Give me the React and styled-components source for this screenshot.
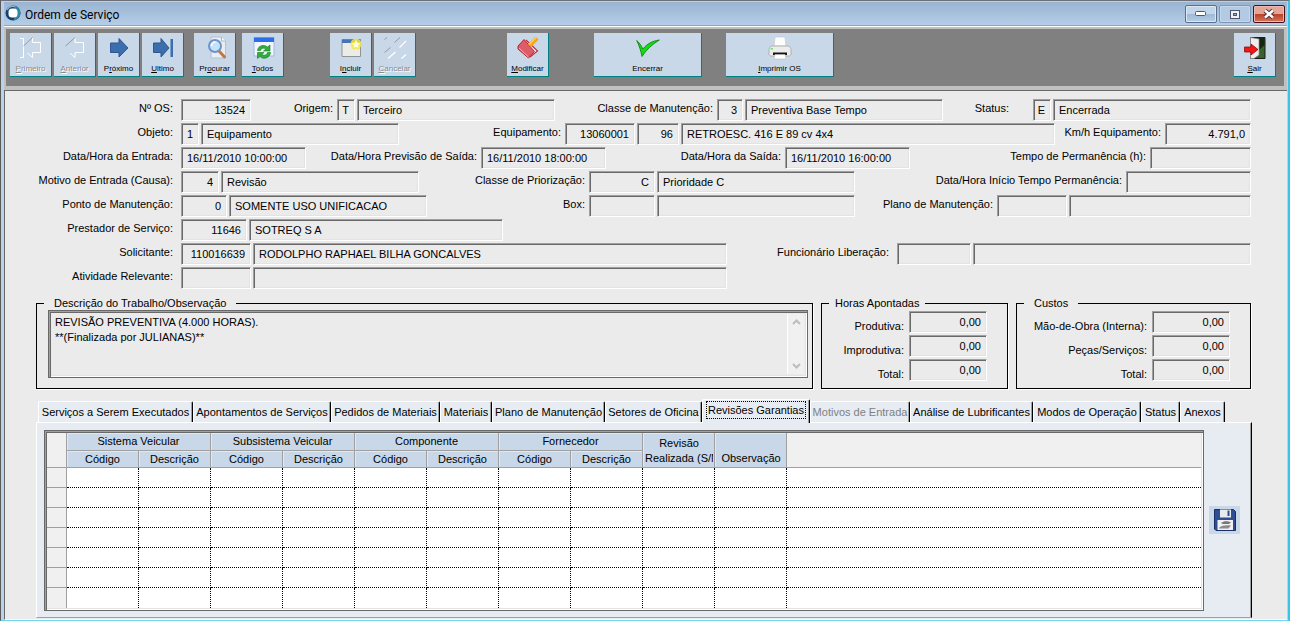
import React, { useState } from "react";
import styled, { createGlobalStyle, css } from "styled-components";

const tabs = [
  { name: "Serviços a Serem Executados", width: 155 },
  { name: "Apontamentos de Serviços", width: 138 },
  { name: "Pedidos de Materiais", width: 109 },
  { name: "Materiais", width: 52 },
  { name: "Plano de Manutenção", width: 113 },
  { name: "Setores de Oficina", width: 97 },
  { name: "Revisões Garantias", width: 108 },
  { name: "Motivos de Entrada", width: 100, disabled: true },
  { name: "Análise de Lubrificantes", width: 123 },
  { name: "Modos de Operação", width: 108 },
  { name: "Status", width: 39 },
  { name: "Anexos", width: 45 },
];

const groups = ["Sistema Veicular", "Subsistema Veicular", "Componente", "Fornecedor"];

// each row is a list of groups: label, label width, gap before the first field, fields
const rows = [
  [
    { label: "Nº OS:", fields: [{ w: 70, value: "13524", right: true }] },
    { label: "Origem:", w: 86, fields: [{ w: 18, value: "T", right: true }, { w: 198, value: "Terceiro" }] },
    { label: "Classe de Manutenção:", w: 162, fields: [{ w: 26, value: "3", right: true }, { w: 198, value: "Preventiva Base Tempo" }] },
    { label: "Status:", w: 90, space: 24, fields: [{ w: 18, value: "E", right: true }, { w: 198, value: "Encerrada" }] },
  ],
  [
    { label: "Objeto:", fields: [{ w: 18, value: "1", right: true }, { w: 198, value: "Equipamento" }] },
    { label: "Equipamento:", w: 166, fields: [{ w: 70, value: "13060001", right: true }, { w: 42, value: "96", right: true }, { w: 374, value: "RETROESC. 416 E 89 cv 4x4" }] },
    { label: "Km/h Equipamento:", w: 110, fields: [{ w: 86, value: "4.791,0", right: true }] },
  ],
  [
    { label: "Data/Hora da Entrada:", fields: [{ w: 125, value: "16/11/2010 10:00:00" }] },
    { label: "Data/Hora Previsão de Saída:", w: 175, fields: [{ w: 125, value: "16/11/2010 18:00:00" }] },
    { label: "Data/Hora da Saída:", w: 179, fields: [{ w: 125, value: "16/11/2010 16:00:00" }] },
    { label: "Tempo de Permanência (h):", w: 240, fields: [{ w: 101 }] },
  ],
  [
    { label: "Motivo de Entrada (Causa):", fields: [{ w: 38, value: "4", right: true }, { w: 198, value: "Revisão" }] },
    { label: "Classe de Priorização:", w: 170, fields: [{ w: 66, value: "C", right: true }, { w: 198, value: "Prioridade C" }] },
    { label: "Data/Hora Início Tempo Permanência:", w: 271, fields: [{ w: 125 }] },
  ],
  [
    { label: "Ponto de Manutenção:", fields: [{ w: 46, value: "0", right: true }, { w: 198, value: "SOMENTE USO UNIFICACAO" }] },
    { label: "Box:", w: 162, fields: [{ w: 66 }, { w: 198 }] },
    { label: "Plano de Manutenção:", w: 142, fields: [{ w: 70 }, { w: 182 }] },
  ],
  [
    { label: "Prestador de Serviço:", fields: [{ w: 66, value: "11646", right: true }, { w: 254, value: "SOTREQ S A" }] },
  ],
  [
    { label: "Solicitante:", fields: [{ w: 70, value: "110016639", right: true }, { w: 474, value: "RODOLPHO RAPHAEL BILHA GONCALVES" }] },
    { label: "Funcionário Liberação:", w: 170, space: 8, fields: [{ w: 74 }, { w: 278 }] },
  ],
  [{ label: "Atividade Relevante:", fields: [{ w: 70 }, { w: 474 }] }],
];

const Icon = ({ children, size = 24 }) => (
  <svg width={size} height={size} viewBox="0 0 24 24" aria-hidden="true">
    {children}
  </svg>
);

const FirstIcon = () => (
  <Icon>
    <g fill="none" strokeWidth="1">
      <path d="M1 2.500H4.500V21.500H1M13.500 2V6.500H21.500V16.500H13.500V21.500L8.500 17" stroke="#fff" />
      <path d="M4.500 10L13.500 1.500" stroke="#999" />
    </g>
  </Icon>
);

const PreviousIcon = () => (
  <Icon>
    <g fill="none">
      <path d="M12 2V6.500H20.500V16.500H12V21.500L7 17" stroke="#fff" />
      <path d="M2.500 10L12 1.500" stroke="#999" />
    </g>
  </Icon>
);

const NextIcon = () => (
  <Icon>
    <path d="M3.500 7H12V2.500L21 12L12 21V16.500H3.500Z" fill="#3b6ead" stroke="#2d578f" strokeWidth="1" />
  </Icon>
);

const LastIcon = () => (
  <Icon>
    <path d="M2.500 7H10V2.500L18 12L10 21V16.500H2.500Z" fill="#3b6ead" stroke="#2d578f" strokeWidth="1" />
    <path d="M19.500 3H22V21H19.500Z" fill="#3b6ead" />
  </Icon>
);

const SearchIcon = () => (
  <Icon>
    <path d="M8 1H18.500L22.500 5V22H8Z" fill="#e9eef5" stroke="#b4c1d2" strokeWidth="1" />
    <path d="M18.500 1V5H22.500" fill="#fff" stroke="#a9b6c7" strokeWidth="1" />
    <path d="M16 15L21.500 21" stroke="#c07a45" strokeWidth="3" strokeLinecap="round" />
    <circle cx="12" cy="10" r="6" fill="#c4e2fa" stroke="#6e94c8" strokeWidth="2" />
    <path d="M8.500 10A4 4 0 0 1 12.500 6" fill="none" stroke="#fff" strokeWidth="1.500" />
  </Icon>
);

const RefreshIcon = () => (
  <Icon>
    <path d="M3 1.500H23V20H3Z" fill="#f2f6fc" stroke="#9db8e0" strokeWidth="1" />
    <path d="M3 1.500H23V6H3Z" fill="#2a6ee8" />
    <path d="M6.500 14.500C7 9.500 13 8 16.500 11L19 9V15H12.500L15 13C13 11.500 10 12 9.500 14.500Z" fill="#2fae3a" stroke="#137a20" strokeWidth="0.600" />
    <path d="M19.500 16.500C19 22 12.500 24 9 20.500L6.500 22.500V16.500H13L11 18.500C13 20 16 19 16.500 16.500Z" fill="#2fae3a" stroke="#137a20" strokeWidth="0.600" />
  </Icon>
);

const NewIcon = () => (
  <Icon>
    <path d="M3 3.500H21.500V20.500H3Z" fill="#ecebe6" stroke="#8f9498" strokeWidth="1" />
    <path d="M3 3.500H21.500V7H3Z" fill="#4574b8" />
    <circle cx="17" cy="8" r="5.500" fill="#f6ee4c" opacity="0.800" />
    <path d="M17 3L18.500 6.500L22 7L19.500 9.500L20 13L17 11.300L14 13L14.500 9.500L12 7L15.500 6.500Z" fill="#fffde0" stroke="#f0dc28" strokeWidth="0.700" />
  </Icon>
);

const CancelIcon = () => (
  <Icon>
    <path d="M1.500 3.500L4 1.500M11.500 6.500L17 1.500M1.500 16.500L7.500 11.500" stroke="#999" />
    <path d="M16.500 11.500L23 5M5 22.500L12.500 16M18.500 22.500L23 18.500" stroke="#fff" strokeWidth="1.200" />
  </Icon>
);

const EditIcon = () => (
  <Icon>
    <path d="M10 4L21.500 15L14 21" fill="#fff" stroke="#c02c3c" strokeWidth="1.200" />
    <path d="M2 10L8 3.500L18.500 15.500L12.500 22L2 13Z" fill="#dd5c68" stroke="#b82434" strokeWidth="1" />
    <path d="M3 12L12.500 21" stroke="#f7b3b8" strokeWidth="1" />
    <path d="M13.500 9.500L21 2" stroke="#f5a51c" strokeWidth="4.500" />
    <path d="M13 8.500L20 1.500" stroke="#ffd55c" strokeWidth="1.500" />
  </Icon>
);

const CheckIcon = () => (
  <Icon>
    <path d="M0.700 4.500C3 6.500 5.500 9.500 6.800 13C11 8 16 5 23.300 4C16 8.500 10 14 6 20.500C5 15 3 9 0.700 4.500Z" fill="#12dc12" stroke="#087a08" strokeWidth="0.800" />
  </Icon>
);

const PrintIcon = () => (
  <Icon>
    <path d="M7 1H17L18 10H6Z" fill="#fdfdfd" stroke="#c9c9c9" strokeWidth="0.700" />
    <path d="M4.500 10H19.500C22 10 23 12 23 14V18C23 19 22 20 21 20H3C2 20 1 19 1 18V14C1 12 2 10 4.500 10Z" fill="#ececea" stroke="#a5a5a3" strokeWidth="0.800" />
    <path d="M5 16.500H19V19H5Z" fill="#151515" />
    <path d="M7 18.500H17L18 23H6Z" fill="#fff" stroke="#bbb" strokeWidth="0.600" />
    <path d="M2.500 12H5V13.500H2.500Z" fill="#73e073" />
  </Icon>
);

const ExitIcon = () => (
  <Icon>
    <path d="M7.500 1.500H22V22.500H7.500Z" fill="#37632a" stroke="#1d1d1d" strokeWidth="1" />
    <path d="M14 2H21.500V9L14 16Z" fill="#17270f" />
    <path d="M7.500 1.500L16 3V19L11 22.500H7.500Z" fill="#eee" stroke="#8a8a8a" strokeWidth="0.700" />
    <path d="M1.500 11H8V8L15 13.500L8 19V16H1.500Z" fill="#f21616" stroke="#990808" strokeWidth="0.800" />
  </Icon>
);

const SaveIcon = () => (
  <Icon>
    <path d="M1.500 1.500H20.500L22.500 3.500V22.500H3L1.500 21Z" fill="#2f4d95" stroke="#1b2c66" strokeWidth="1" />
    <path d="M7 1.500H18V9.500H7Z" fill="#e9ebef" />
    <path d="M14.500 2.500H16.500V8H14.500Z" fill="#2f4d95" />
    <path d="M4.500 12H20V22H4.500Z" fill="#f1f1f1" />
    <path d="M8 15C11 12.500 15 13 18 14.500L16 16H10Z" fill="#777" />
    <path d="M6 20C8 17 15 17 18 17.500L15.500 20.500H6Z" fill="#8c8c8c" />
  </Icon>
);

const Logo = () => (
  <svg width="16" height="16" viewBox="0 0 16 16" aria-hidden="true">
    <circle cx="8" cy="8" r="7.500" fill="#1b3f6b" />
    <path d="M8 0.500A7.500 7.500 0 0 1 8 15.500C11 13 11 3 8 0.500Z" fill="#2f86a5" />
    <path d="M2 5A7 7 0 0 1 10 1.500" fill="none" stroke="#8fb4cf" strokeWidth="1.500" />
    <rect x="3.500" y="3.500" width="9" height="9" rx="3.500" fill="#fff" />
  </svg>
);

const tools = [
  { label: "Primeiro", icon: FirstIcon, disabled: true },
  { label: "Anterior", icon: PreviousIcon, disabled: true },
  { label: "Próximo", icon: NextIcon, under: 1 },
  { label: "Ultimo", icon: LastIcon },
  { label: "Procurar", icon: SearchIcon, under: 2, before: 8 },
  { label: "Todos", icon: RefreshIcon, before: 4 },
  { label: "Incluir", icon: NewIcon, under: 1, before: 44 },
  { label: "Cancelar", icon: CancelIcon, disabled: true },
  { label: "Modificar", icon: EditIcon, before: 89 },
  { label: "Encerrar", icon: CheckIcon, under: -1, before: 43, wide: true },
  { label: "Imprimir OS", icon: PrintIcon, before: 22, wide: true },
  { label: "Sair", icon: ExitIcon, last: true },
];

const ToolButton = ({ tool }) => {
  const text = tool.label;
  const at = tool.under || 0;
  const Picture = tool.icon;

  return (
    <Tool type="button" disabled={tool.disabled} $before={tool.before} $wide={tool.wide} $last={tool.last}>
      <Picture />
      <span>
        {at < 0 ? text : (
          <>
            {text.slice(0, at)}
            <u>{text[at]}</u>
            {text.slice(at + 1)}
          </>
        )}
      </span>
    </Tool>
  );
};

const FormGroup = ({ group, id }) => (
  <>
    <Label htmlFor={id + "-0"} $width={group.w} $space={group.space}>
      {group.label}
    </Label>
    <Fields>
      {group.fields.map((field, i) => (
        <Field
          key={i}
          id={id + "-" + i}
          aria-label={i > 0 ? group.label : undefined}
          defaultValue={field.value}
          $width={field.w}
          $right={field.right}
          readOnly
        />
      ))}
    </Fields>
  </>
);

const Totals = ({ title, labels, id, width, tight }) => (
  <Box $width={width} $tight={tight}>
    <legend>{title}</legend>
    <TotalList>
      {labels.map((label, i) => (
        <TotalRow key={label}>
          <label htmlFor={id + i}>{label}</label>
          <Field id={id + i} defaultValue="0,00" $width={78} $right readOnly />
        </TotalRow>
      ))}
    </TotalList>
  </Box>
);

const App = () => {
  const [active, setActive] = useState("Revisões Garantias");

  return (
    <>
      <GlobalStyle />
      <Window>
        <TitleBar>
          <Logo />
          <h1>Ordem de Serviço</h1>
          <WindowButton type="button" aria-label="Minimizar">
            <svg width="12" height="6" viewBox="0 0 12 6">
              <rect x="0.5" y="0.5" width="10" height="4" rx="1" fill="#fff" stroke="#535666" />
            </svg>
          </WindowButton>
          <WindowButton type="button" aria-label="Restaurar" $faded>
            <svg width="11" height="9" viewBox="0 0 11 9">
              <rect x="0.5" y="0.5" width="9" height="8" fill="#eef3fa" stroke="#535666" />
              <rect x="3.5" y="3.5" width="3" height="2" fill="#8fa9c8" stroke="#535666" />
            </svg>
          </WindowButton>
          <WindowButton type="button" aria-label="Fechar" $close>
            <svg width="12" height="10" viewBox="0 0 12 10">
              <path d="M2 1.500L10 8.500M10 1.500L2 8.500" stroke="#4b3440" strokeWidth="4.500" />
              <path d="M2 1.500L10 8.500M10 1.500L2 8.500" stroke="#fff" strokeWidth="2.500" />
            </svg>
          </WindowButton>
        </TitleBar>

        <ToolFrame>
          <Toolbar>
            {tools.map((tool) => (
              <ToolButton key={tool.label} tool={tool} />
            ))}
          </Toolbar>
        </ToolFrame>

        <Content>
          <form>
            {rows.map((row, r) => (
              <Row key={r}>
                {row.map((group, g) => (
                  <FormGroup key={g} group={group} id={"f" + r + "-" + g} />
                ))}
              </Row>
            ))}

            <Boxes>
              <Box>
                <legend>Descrição do Trabalho/Observação</legend>
                <Notes>
                  <textarea
                    aria-label="Descrição do Trabalho/Observação"
                    defaultValue={"REVISÃO PREVENTIVA (4.000 HORAS).\n**(Finalizada por JULIANAS)**"}
                    readOnly
                  />
                  <Scroll>
                    <svg width="9" height="6" viewBox="0 0 9 6">
                      <path d="M1 5L4.500 1.500L8 5" fill="none" stroke="#bdbdbd" strokeWidth="2" />
                    </svg>
                    <svg width="9" height="6" viewBox="0 0 9 6">
                      <path d="M1 1L4.500 4.500L8 1" fill="none" stroke="#bdbdbd" strokeWidth="2" />
                    </svg>
                  </Scroll>
                </Notes>
              </Box>
              <Totals
                title="Horas Apontadas"
                labels={["Produtiva:", "Improdutiva:", "Total:"]}
                id="hours"
                width={187}
                tight
              />
              <Totals
                title="Custos"
                labels={["Mão-de-Obra (Interna):", "Peças/Serviços:", "Total:"]}
                id="costs"
                width={235}
              />
            </Boxes>
          </form>

          <TabList role="tablist">
            {tabs.map((tab) => (
              <Tab
                key={tab.name}
                type="button"
                role="tab"
                aria-selected={tab.name === active}
                disabled={tab.disabled}
                onClick={() => setActive(tab.name)}
                $width={tab.width}
                $active={tab.name === active}
              >
                <span>{tab.name}</span>
              </Tab>
            ))}
          </TabList>

          <TabPanel role="tabpanel">
            <GridFrame>
              <Grid>
                <colgroup>
                  <col width="20" />
                  {Array.from({ length: 10 }, (_, i) => (
                    <col key={i} width="72" />
                  ))}
                  <col />
                </colgroup>
                <thead>
                  <tr>
                    <Corner rowSpan="2" />
                    {groups.map((group) => (
                      <th key={group} colSpan="2">{group}</th>
                    ))}
                    <TallHead rowSpan="2">
                      <div>
                        <span>Revisão</span>
                        <span>Realizada (S/N)</span>
                      </div>
                    </TallHead>
                    <TallHead rowSpan="2">
                      <div>
                        <span>Observação</span>
                      </div>
                    </TallHead>
                    <Rest rowSpan="2" />
                  </tr>
                  <tr>
                    {groups.map((group) => (
                      <React.Fragment key={group}>
                        <th>Código</th>
                        <th>Descrição</th>
                      </React.Fragment>
                    ))}
                  </tr>
                </thead>
                <tbody>
                  {Array.from({ length: 7 }, (_, r) => (
                    <tr key={r}>
                      {Array.from({ length: 12 }, (_, c) => (
                        <td key={c} />
                      ))}
                    </tr>
                  ))}
                </tbody>
              </Grid>
            </GridFrame>
            <SaveButton type="button" aria-label="Salvar">
              <SaveIcon />
            </SaveButton>
          </TabPanel>
        </Content>
      </Window>
    </>
  );
};

const GlobalStyle = createGlobalStyle`
  * {
    box-sizing: border-box;
  }

  body {
    margin: 0;
    font-family: "Liberation Sans", Arial, sans-serif;
    font-size: 11px;
    color: #000;
  }

  button, input, textarea {
    font: inherit;
    color: inherit;
    border-radius: 0;
  }
`;

const Window = styled.div`
  display: flex;
  flex-direction: column;
  min-height: 100vh;
  padding: 1px 1px 0 3px;
  background-color: #b9d1ea;
  border-style: solid;
  border-width: 1px 2px 2px 1px;
  border-color: #6f6f78 #35c5e5 #6fd8ee #5a5a5a;
`;

const TitleBar = styled.header`
  display: flex;
  align-items: flex-start;
  gap: 2px;
  height: 25px;
  padding: 3px 2px 0 1px;
  background: linear-gradient(#99b4d1, #b6cfe9);
  border-bottom: 1px solid #fff;
  box-shadow: inset 0 -1px #a0a0a0;

  h1 {
    flex: 1;
    margin: 0 0 0 2px;
    font-family: Roboto, "Segoe UI", sans-serif;
    font-size: 12px;
    line-height: 20px;
    font-weight: 400;
  }
`;

const WindowButton = styled.button`
  display: flex;
  align-items: center;
  justify-content: center;
  width: 32px;
  height: 18px;
  padding: 0;
  border: 1px solid #5a6f8c;
  border-radius: 2px;
  background: linear-gradient(#c3d5e9 50%, #9fb9d6 50%, #b5cee8);
  box-shadow: inset 0 0 0 1px #dce8f4;

  ${(props) =>
    props.$faded &&
    css`
      border-color: #8097b4;
      background: #b3cae4;
      box-shadow: inset 0 0 0 1px #c6d8ec;
    `}

  ${(props) =>
    props.$close &&
    css`
      border-color: #4a1018;
      background: linear-gradient(#e3a598 50%, #bb3f26 50%, #d4765c);
      box-shadow: inset 0 0 0 1px #eebbb0;
    `}
`;

const ToolFrame = styled.div`
  padding: 2px 3px 4px 2px;
  background-color: #c0c0c0;
  border-bottom: 1px solid #696969;
`;

const Toolbar = styled.nav`
  display: flex;
  gap: 2px;
  padding: 4px 8px 9px 4px;
  background-color: #808080;
`;

const Tool = styled.button`
  display: flex;
  flex: none;
  flex-direction: column;
  align-items: center;
  width: ${(props) => (props.$wide ? 108 : 42)}px;
  height: 44px;
  margin-left: ${(props) => (props.$last ? "auto" : (props.$before || 0) + "px")};
  padding: 3px 0 0;
  background-color: #c8d8e8;
  border: solid #008080;
  border-width: 0 1px 1px 0;

  span {
    margin-top: 3px;
    font-size: 8px;
    line-height: 12px;
  }

  &:disabled {
    color: #8c8c8c;
    text-shadow: 1px 1px #fff;
  }
`;

const Content = styled.main`
  display: flex;
  flex: 1;
  flex-direction: column;
  padding: 8px 36px 1px 0;
  background-color: #ebebeb;
  border-left: 1px solid #696969;
  border-bottom: 1px solid #fff;
`;

const Row = styled.div`
  display: flex;
  height: 24px;
`;

const Label = styled.label`
  flex: ${(props) => (props.$width ? "1 1 " + props.$width + "px" : "none")};
  width: ${(props) => props.$width || 176}px;
  padding-right: ${(props) => props.$space || (props.$width ? 4 : 8)}px;
  line-height: 18px;
  text-align: right;
  white-space: nowrap;
`;

const Fields = styled.div`
  display: flex;
  gap: 2px;
`;

const Field = styled.input`
  width: ${(props) => props.$width}px;
  height: 22px;
  padding: ${(props) => (props.$right ? "0 5px 0 1px" : "0 5px")};
  background-color: #ebebeb;
  border: 1px solid;
  border-color: #a0a0a0 #fff #fff #a0a0a0;
  box-shadow: inset 1px 1px #696969, inset -1px -1px #e3e3e3;
  text-align: ${(props) => (props.$right ? "right" : "left")};
  outline: none;
`;

const Boxes = styled.div`
  display: flex;
  gap: 8px;
  margin: 5px 0 0 31px;
`;

const Box = styled.fieldset`
  flex: ${(props) => (props.$width ? "none" : "1")};
  width: ${(props) => (props.$width ? props.$width + "px" : "auto")};
  min-width: 0;
  height: 93px;
  margin: 0;
  padding: 0 4px 0 11px;
  border: 1px solid #000;
  box-shadow: 1px 1px #fff;

  legend {
    margin-left: -4px;
    padding: 0 ${(props) => (props.$tight ? 6 : 10)}px;
    line-height: 14px;
  }
`;

const Notes = styled.div`
  display: flex;
  height: 68px;
  border: 1px solid #696969;
  box-shadow: inset 1px 1px #a0a0a0, inset 2px 2px #696969, inset -1px -1px #fff, inset -2px -2px #e3e3e3;
  padding: 3px;

  textarea {
    flex: 1;
    padding: 1px 3px;
    background: none;
    border: 0;
    outline: none;
    resize: none;
    line-height: 15px;
    overflow: hidden;
  }
`;

const Scroll = styled.div`
  display: flex;
  flex-direction: column;
  align-items: center;
  justify-content: space-between;
  width: 17px;
  padding: 5px 0;
  background-color: #f0f0f0;
  border-left: 1px solid #fff;
`;

const TotalList = styled.div`
  padding: 1px 16px 0 0;
`;

const TotalRow = styled.div`
  display: flex;
  justify-content: flex-end;
  gap: 5px;
  height: 24px;

  label {
    padding-top: 6px;
    line-height: 18px;
    white-space: nowrap;
  }
`;

const TabList = styled.div`
  display: flex;
  align-items: flex-end;
  height: 23px;
  margin: 10px 0 0 33px;
`;

const Tab = styled.button`
  position: relative;
  width: ${(props) => props.$width}px;
  height: ${(props) => (props.$active ? 24 : 21)}px;
  margin-bottom: ${(props) => (props.$active ? -1 : 0)}px;
  padding: 0 0 ${(props) => (props.$active ? 3 : 0)}px;
  background-color: #e6ecf1;
  border: 1px solid;
  border-color: #fff #000 transparent #fff;
  border-bottom: 0;
  border-radius: 2px 2px 0 0;
  box-shadow: inset -1px 0 #a0a0a0;
  white-space: nowrap;

  span {
    display: inline-block;
    padding: 1px;
    line-height: 14px;
    ${(props) => props.$active && "outline: 1px dotted #000;"}
  }

  &:disabled {
    color: #808080;
  }
`;

const TabPanel = styled.section`
  display: flex;
  flex: 1;
  align-items: flex-start;
  gap: 5px;
  margin: 0 -1px 0 31px;
  padding: 7px 11px 6px 7px;
  background-color: #e6ecf1;
  border: 1px solid;
  border-color: #fff #000 #a0a0a0 #fff;
  box-shadow: inset -1px 0 #a0a0a0;
`;

const GridFrame = styled.div`
  flex: 1;
  min-width: 0;
  padding: 2px;
  background-color: #fff;
  border: 1px solid #696969;
  box-shadow: inset 1px 1px #a0a0a0, inset 2px 2px #696969, inset -1px -1px #fff, inset -2px -2px #e3e3e3;
`;

const Grid = styled.table`
  width: 100%;
  table-layout: fixed;
  border-collapse: separate;
  border-spacing: 0;

  th {
    height: 17px;
    padding: 0;
    background-color: #c8d8e8;
    border: solid #a0a0a0;
    border-width: 0 1px 1px 0;
    box-shadow: inset 1px 1px #dfe9f2;
    font-weight: 400;
    line-height: 15px;
    overflow: hidden;
  }

  thead tr:first-child th {
    height: 18px;
  }

  td {
    height: 20px;
    padding: 0;
    border: dotted #000;
    border-width: 0 1px 1px 0;
  }

  td:first-child {
    background-color: #f0f0f0;
    border-style: solid;
    border-color: #a0a0a0;
  }

  td:last-child {
    border-right: 0;
  }

  tr:last-child td {
    border-bottom: 0;
  }
`;

const Corner = styled.td`
  && {
    border-bottom: 1px solid #a0a0a0;
  }
`;

const TallHead = styled.th`
  div {
    display: flex;
    flex-direction: column;
    align-items: center;
    justify-content: flex-end;
    height: 32px;
    padding: 0 1px 0 2px;
  }

  span {
    max-width: 100%;
    white-space: nowrap;
    line-height: 15px;
    overflow: hidden;
  }
`;

const Rest = styled.td`
  && {
    background-color: #f0f0f0;
    border-bottom: 1px solid #a0a0a0;
  }
`;

const SaveButton = styled.button`
  display: flex;
  align-items: center;
  justify-content: center;
  width: 31px;
  height: 28px;
  margin-top: 76px;
  padding: 0;
  background-color: #c8d8e8;
  border: 0;
`;

export default App;
